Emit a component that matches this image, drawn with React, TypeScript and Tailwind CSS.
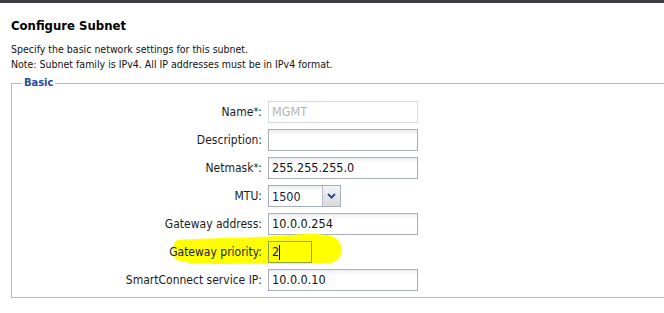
import React from 'react';

const font = { fontFamily: '"DejaVu Sans Condensed", "DejaVu Sans", sans-serif' };

const inputBase =
    'h-[22px] border px-[3px] text-[12.5px] leading-[20px] flex items-center';

const Field: React.FC<{ label: string; req?: boolean; children: React.ReactNode }> = ({ label, req, children }) => (
    <div className="flex items-center h-[22px]">
        <div className="w-[256px] pr-[6px] text-right text-[12px] text-[#1c1c1c]">
            {label}
            {req && <sup className="text-[11px] relative top-[-1px]">*</sup>}:
        </div>
        {children}
    </div>
);

const App: React.FC = () => {
    return (
        <div className="w-[664px] h-[313px] overflow-hidden bg-white text-[#111]" style={font}>
            {/* top bar */}
            <div className="h-[3px] bg-[#3c3c41]"></div>

            <div className="pl-[11px]">
                <h1 className="pt-[15px] text-[13px] font-bold leading-[16px] text-black">Configure Subnet</h1>
                <div className="mt-[8px] text-[10.5px] leading-[15px] text-[#111]">
                    <p>Specify the basic network settings for this subnet.</p>
                    <p>Note: Subnet family is IPv4. All IP addresses must be in IPv4 format.</p>
                </div>

                <fieldset className="mt-[4px] w-[720px] h-[222px] border border-[#b6b8c8] pl-0 pt-[11px]">
                    <legend className="ml-[10px] px-[2px] text-[11px] font-bold leading-[14px] text-[#1d4c9c]">Basic</legend>

                    <div className="flex flex-col gap-[6px]">
                        <Field label="Name" req>
                            <div className={`${inputBase} w-[150px] border-[#d6d8e2] bg-white text-[#b4b4b4]`}>MGMT</div>
                        </Field>
                        <Field label="Description">
                            <div className={`${inputBase} w-[150px] border-[#a9adc0] bg-[linear-gradient(#eceef2,#ffffff_5px)]`}></div>
                        </Field>
                        <Field label="Netmask" req>
                            <div className={`${inputBase} w-[150px] border-[#a9adc0] bg-[linear-gradient(#eceef2,#ffffff_5px)]`}>255.255.255.0</div>
                        </Field>
                        <Field label="MTU">
                            <div className="flex h-[22px] w-[73px] border border-[#a9adc0] bg-[linear-gradient(#eceef2,#ffffff_5px)]">
                                <div className="flex-1 px-[3px] pt-[2px] text-[12.5px] leading-[18px] text-[#1a1a40]">1500</div>
                                <div className="w-[18px] flex items-center justify-center border-l border-[#b8bbc8] bg-[linear-gradient(#f4f4f6,#d8dade)]">
                                    <svg width="9" height="6" viewBox="0 0 9 6">
                                        <path d="M1 1 L4.5 4.5 L8 1" stroke="#2a4c8a" strokeWidth="2" fill="none" />
                                    </svg>
                                </div>
                            </div>
                        </Field>
                        <Field label="Gateway address">
                            <div className={`${inputBase} w-[150px] border-[#a9adc0] bg-[linear-gradient(#eceef2,#ffffff_5px)]`}>10.0.0.254</div>
                        </Field>
                        <div className="relative">
                            {/* highlighter mark */}
                            <svg className="absolute left-[160px] top-[-8px]" width="172" height="32" viewBox="0 0 172 32">
                                <path
                                    d="M6 7 C30 5 80 5 120 2 C145 0 162 1 167 8 C172 16 170 27 160 30 C130 32 90 30 50 31 C25 31 6 30 3 25 C0 19 0 9 6 7 Z"
                                    fill="#ffff00"
                                />
                            </svg>
                            <div className="relative">
                                <Field label="Gateway priority">
                                    <div className={`${inputBase} w-[44px] border-[#8ea43c] bg-transparent relative`}>
                                        <span className="absolute left-0 top-[-1px] w-[8px] h-px bg-[#7fa0d0]"></span>
                                        2<span className="inline-block w-px h-[15px] bg-black"></span>
                                    </div>
                                </Field>
                            </div>
                        </div>
                        <Field label="SmartConnect service IP">
                            <div className={`${inputBase} w-[150px] border-[#a9adc0] bg-[linear-gradient(#eceef2,#ffffff_5px)]`}>10.0.0.10</div>
                        </Field>
                    </div>
                </fieldset>
            </div>
        </div>
    );
};

export default App;
